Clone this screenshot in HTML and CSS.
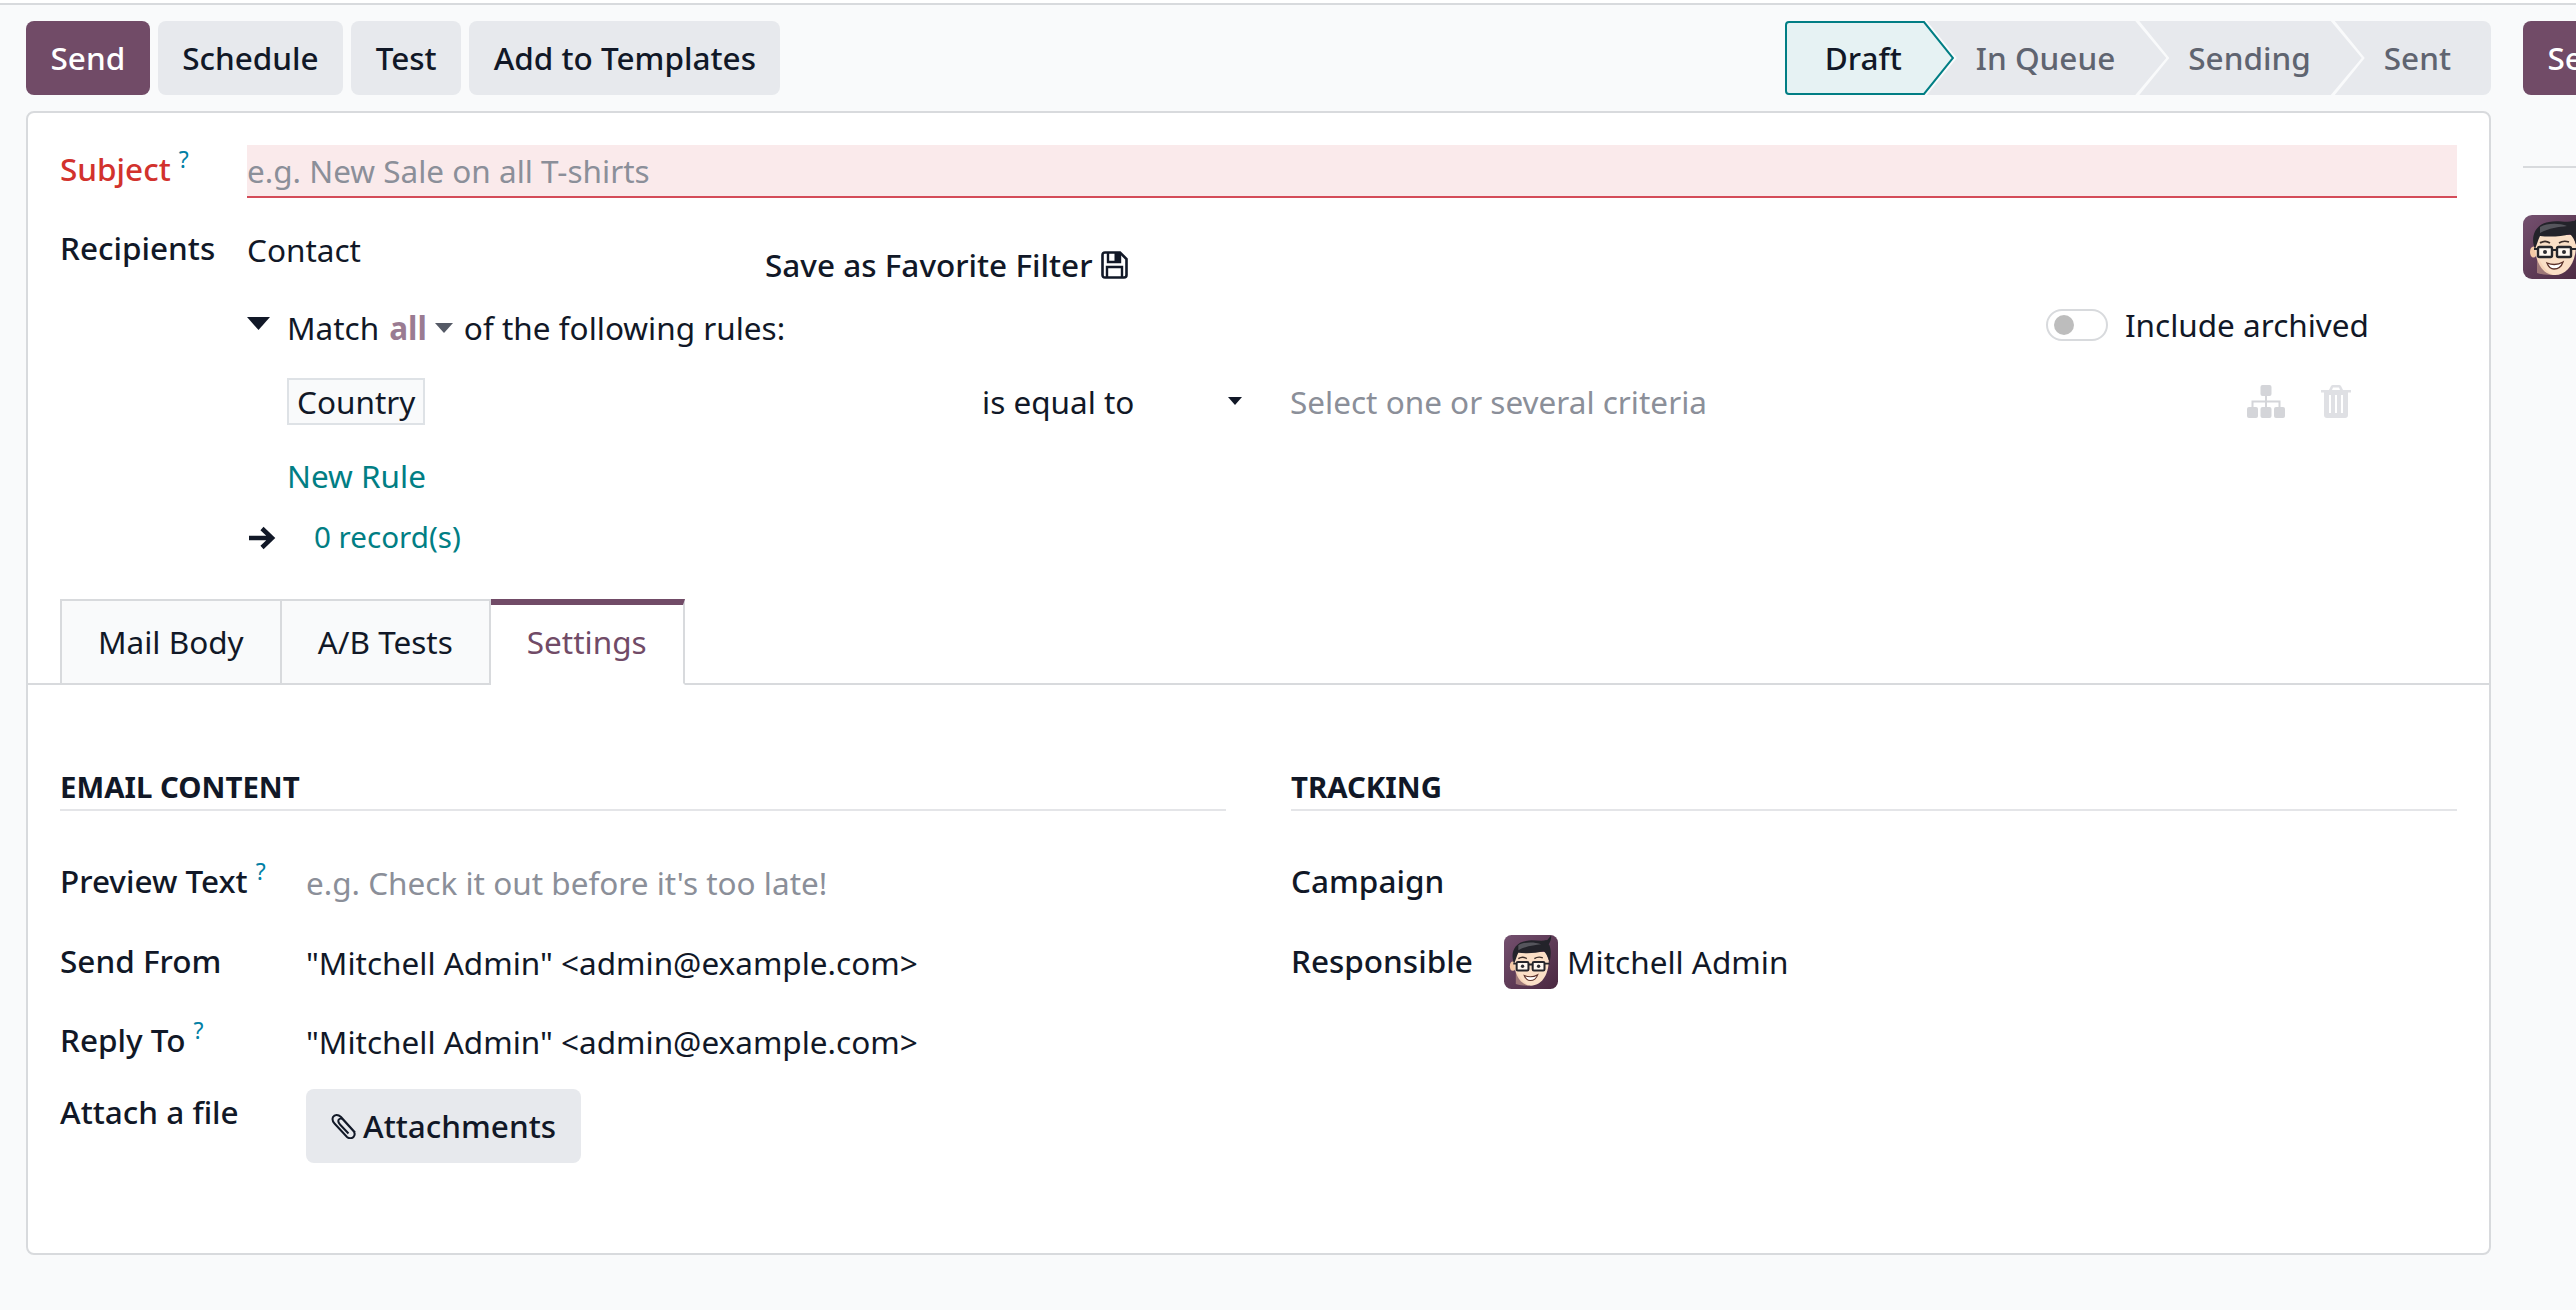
FILE: index.html
```html
<!DOCTYPE html>
<html lang="en">
<head>
<meta charset="utf-8">
<title>Mailing</title>
<link rel="stylesheet" href="styles.css">
</head>
<body>
<svg class="defs" width="0" height="0" aria-hidden="true">
  <defs>
    <linearGradient id="avbg" x1="0" y1="0" x2="1" y2="1">
      <stop offset="0" stop-color="#74506f"/>
      <stop offset="1" stop-color="#4a2840"/>
    </linearGradient>
    <symbol id="avatar" viewBox="0 0 64 64">
      <rect width="64" height="64" rx="9" fill="url(#avbg)"/>
      <ellipse cx="10.500" cy="37" rx="3.500" ry="5.500" fill="#f3c9a6"/>
      <path d="M12 30C12 48 20 60 32 60S53 48 53 30L50 20H16Z" fill="#fadfc6"/>
      <path d="M14 58C20 60 26 60 30 60C22 56 17 48 14 38Z" fill="#f0c6a6" opacity=".45"/>
      <path d="M12 34C7 22 12 9 26 7C34 5 44 8 50 6C52 7 53 3 56 1C56 5 55 8 53 11C56 15 56 24 54 32C52 26 50 22 47 19C38 22 25 22 17 21C15 25 14 29 12 34Z" fill="#23232a"/>
      <path d="M17 12C24 8 36 8 44 11C36 12 26 13 17 18Z" fill="#55555c"/>
      <rect x="15" y="32" width="14" height="10" rx="1.500" fill="#fff8f0" stroke="#26262b" stroke-width="2.400"/>
      <rect x="34" y="32" width="14" height="10" rx="1.500" fill="#fff8f0" stroke="#26262b" stroke-width="2.400"/>
      <path d="M29 35H34M48 34L54 34M15 34L11 34" stroke="#26262b" stroke-width="2.200" fill="none"/>
      <circle cx="22" cy="37" r="2" fill="#2c2c30"/>
      <circle cx="41" cy="37" r="2" fill="#2c2c30"/>
      <path d="M17 28C20 26 24 26 27 28M36 28C39 26 43 26 46 27" stroke="#3a2c28" stroke-width="1.600" fill="none"/>
      <path d="M24 48C29 50 35 50 40 47C38 53 35 54 31 54C28 54 25.500 52 24 48Z" fill="#fff" stroke="#5b3028" stroke-width="1.300"/>
    </symbol>
  </defs>
</svg>

<div class="app">
  <div class="topline"></div>
  <div class="columns">
    <main class="main">
      <header class="panel">
        <div class="actions">
          <button class="btn btn-primary">Send</button>
          <button class="btn">Schedule</button>
          <button class="btn">Test</button>
          <button class="btn">Add to Templates</button>
        </div>
        <div class="statusbar">
          <div class="stage stage-current">
            <svg class="draft-shape" viewBox="0 0 169 74" aria-hidden="true"><path d="M1 4Q1 1 4 1H139L168 37L139 73H4Q1 73 1 70Z" fill="#e6f2f3" stroke="#017e84" stroke-width="2"/></svg>
            <span class="stage-label">Draft</span>
          </div>
          <div class="stage">In Queue</div>
          <div class="stage">Sending</div>
          <div class="stage stage-last">Sent</div>
        </div>
      </header>

      <section class="sheet">
        <div class="top-row subject-row">
          <label class="label label-required">Subject<sup class="help">?</sup></label>
          <div class="subject-field"><span class="placeholder">e.g. New Sale on all T-shirts</span></div>
        </div>

        <div class="top-row recipients-row">
          <label class="label">Recipients</label>
          <div class="domain">
            <div class="model-line">
              <span class="value">Contact</span>
              <span class="favorite">Save as Favorite Filter
                <svg class="icon-floppy" viewBox="0 0 27 28" aria-hidden="true"><path d="M1.500 4Q1.500 1.500 4 1.500H19L25.500 8V24Q25.500 26.500 23 26.500H4Q1.500 26.500 1.500 24Z" fill="none" stroke="#111827" stroke-width="2.600"/><path d="M7 2V11H19V2M6 26V16H21V26" fill="none" stroke="#111827" stroke-width="2.400"/><rect x="13.500" y="2" width="5" height="8" fill="#111827"/></svg>
              </span>
            </div>
            <div class="match-line">
              <svg class="tri" viewBox="0 0 23 13" aria-hidden="true"><path d="M0 0H23L11.500 13Z" fill="#111827"/></svg>
              <span class="match-text">Match</span>
              <span class="match-all">all</span>
              <svg class="tri-small" viewBox="0 0 18 10" aria-hidden="true"><path d="M0 0H18L9 10Z" fill="#555a66"/></svg>
              <span>of the following rules:</span>
              <div class="archived">
                <span class="toggle"><span class="knob"></span></span>
                <span>Include archived</span>
              </div>
            </div>
            <div class="rule-line">
              <div class="rule-field"><span class="chip">Country</span></div>
              <div class="rule-op"><span>is equal to</span><svg class="tri-op" viewBox="0 0 14 8" aria-hidden="true"><path d="M0 0H14L7 8Z" fill="#111827"/></svg></div>
              <span class="placeholder">Select one or several criteria</span>
              <div class="rule-icons">
                <svg class="icon-sitemap" viewBox="0 0 38 33" aria-hidden="true"><g fill="#d4d5d9"><rect x="13.500" y="0" width="11" height="11" rx="2"/><rect x="0" y="22" width="11" height="11" rx="2"/><rect x="13.500" y="22" width="11" height="11" rx="2"/><rect x="27" y="22" width="11" height="11" rx="2"/></g><path d="M19 10V22M5.500 22V16.500H32.500V22" fill="none" stroke="#d4d5d9" stroke-width="2"/></svg>
                <svg class="icon-trash" viewBox="0 0 30 33" aria-hidden="true"><path fill="#dfe0e4" fill-rule="evenodd" d="M0 5H8L10 1Q10.500 0 12 0H18Q19.500 0 20 1L22 5H30V7.500H27V30Q27 33 24 33H6Q3 33 3 30V7.500H0ZM11 5H19L18 2.500H12ZM8 10V28H10V10ZM14 10V28H16V10ZM20 10V28H22V10Z"/></svg>
              </div>
            </div>
            <div class="new-rule">New Rule</div>
            <div class="records-line">
              <svg class="icon-arrow" viewBox="0 0 28 24" aria-hidden="true"><path d="M1 12H24M14 2.500L24 12L14 21.500" fill="none" stroke="#111827" stroke-width="4.500"/></svg>
              <span class="records">0 record(s)</span>
            </div>
          </div>
        </div>

        <nav class="tabs">
          <div class="tab">Mail Body</div>
          <div class="tab">A/B Tests</div>
          <div class="tab tab-active">Settings</div>
        </nav>

        <div class="settings">
          <div class="group">
            <h3 class="group-title">EMAIL CONTENT</h3>
            <div class="fields fields-left">
              <label class="label f-label">Preview Text<sup class="help">?</sup></label>
              <span class="placeholder f-value">e.g. Check it out before it's too late!</span>
              <label class="label f-label">Send From</label>
              <span class="value f-value">"Mitchell Admin" &lt;admin@example.com&gt;</span>
              <label class="label f-label">Reply To<sup class="help">?</sup></label>
              <span class="value f-value">"Mitchell Admin" &lt;admin@example.com&gt;</span>
              <label class="label f-label attach-label">Attach a file</label>
              <div class="attach-cell">
                <button class="btn btn-attach">
                  <svg class="icon-clip" viewBox="0 0 26 26" aria-hidden="true"><path d="M24 19.500L10 4C7 1 3.500 1.500 2 4C1 6.500 1.500 8.500 3.500 10.500L16 24C18 25.800 21 25.500 22.500 24C24 22 24 19.500 22 17.500L12 6.500C10.500 5 8.500 5.500 7.500 7C7 8.500 7.500 10 9 11.500L17.500 20.500" fill="none" stroke="#111827" stroke-width="2"/></svg>
                  Attachments
                </button>
              </div>
            </div>
          </div>
          <div class="group">
            <h3 class="group-title">TRACKING</h3>
            <div class="fields fields-right">
              <label class="label f-label">Campaign</label>
              <span class="f-value"></span>
              <label class="label f-label">Responsible</label>
              <div class="f-value user">
                <svg class="avatar-small" aria-hidden="true"><use href="#avatar"/></svg>
                <span>Mitchell Admin</span>
              </div>
            </div>
          </div>
        </div>
      </section>
    </main>

    <aside class="chatter">
      <button class="btn btn-primary btn-chatter">Send message</button>
      <div class="chatter-rule"></div>
      <svg class="avatar-large" aria-hidden="true"><use href="#avatar"/></svg>
    </aside>
  </div>
</div>
</body>
</html>
```
FILE: styles.css
```css
* { box-sizing: border-box; }
html, body { margin: 0; padding: 0; height: 100%; }
body {
  background: #f9fafb;
  color: #111827;
  font-family: "Noto Sans", "Open Sans", sans-serif;
  font-size: 31.5px;
  line-height: 44px;
  overflow: hidden;
}
.defs { position: absolute; }
.app { width: 2576px; height: 1310px; overflow: hidden; }
.topline { height: 5px; background: #fff; border-bottom: 2px solid #d8dadd; }
.columns { display: flex; padding-left: 26px; gap: 32px; width: 2576px; }
.main { flex: 0 0 2465px; }
.panel { display: flex; justify-content: space-between; padding-top: 16px; height: 90px; }
.actions { display: flex; gap: 8px; }
.btn {
  height: 74px;
  padding: 0 24.5px;
  border: 0;
  border-radius: 8px;
  background: #e7e9ed;
  color: #111827;
  font: 500 31.5px/44px "Noto Sans", "Open Sans", sans-serif;
  white-space: nowrap;
}
.btn-primary { background: #714b67; color: #fff; }

.statusbar { display: flex; height: 74px; }
.stage {
  position: relative;
  height: 74px;
  line-height: 74px;
  padding: 0 51px 0 49px;
  margin-left: -27px;
  background: #e7e9ed;
  color: #5f6470;
  font-weight: 500;
  clip-path: polygon(0 0, calc(100% - 31px) 0, 100% 50%, calc(100% - 31px) 100%, 0 100%, 30px 50%);
}
.stage-current {
  width: 169px;
  margin-left: 0;
  padding: 0 0 0 40px;
  background: none;
  color: #111827;
  clip-path: none;
  z-index: 1;
}
.draft-shape { position: absolute; left: 0; top: 0; width: 169px; height: 74px; }
.stage-label { position: relative; }
.stage-last {
  padding-right: 40px;
  border-radius: 0 8px 8px 0;
  clip-path: polygon(0 0, 100% 0, 100% 100%, 0 100%, 30px 50%);
}

.sheet {
  margin-top: 16px;
  padding: 32px 32px 90px;
  background: #fff;
  border: 2px solid #d8dadd;
  border-radius: 8px;
}
.top-row { display: grid; grid-template-columns: 187px 1fr; }
.label { font-weight: 500; }
.label-required { color: #d2322d; }
.help {
  margin-left: 8px;
  color: #0180a5;
  font-size: 23px;
  font-weight: 400;
  line-height: 0;
  vertical-align: 13px;
}
.placeholder { color: #8b8f99; }
.subject-row .label { line-height: 47px; }
.subject-field {
  height: 53px;
  line-height: 50px;
  padding-top: 1px;
  background: #faeaeb;
  border-bottom: 2px solid #d44c59;
}
.recipients-row { margin-top: 30px; }
.recipients-row > .label { line-height: 40px; }
.model-line { display: grid; grid-template-columns: 518px auto; }
.favorite { margin-top: 15px; display: flex; align-items: center; gap: 8px; width: max-content; font-weight: 500; }
.icon-floppy { width: 27px; height: 28px; }
.match-line { display: flex; align-items: center; margin-top: 19px; padding-right: 88px; }
.tri { width: 23px; height: 13px; margin: -10px 17px 0 0; }
.match-all { margin-left: 10px; color: #9a7b92; font-weight: 700; }
.tri-small { width: 18px; height: 10px; margin: 0 11px 0 8px; }
.archived { margin-left: auto; display: flex; align-items: center; gap: 17px; margin-top: -7px; }
.toggle {
  display: flex;
  align-items: center;
  width: 62px;
  height: 32px;
  padding-left: 6px;
  background: #fff;
  border: 2px solid #d8dadd;
  border-radius: 16px;
}
.knob { width: 20px; height: 20px; border-radius: 50%; background: #bdbdbd; }
.rule-line { display: flex; align-items: center; margin: 28px 0 0 40px; height: 47px; padding-right: 106px; }
.rule-field { flex: 0 0 695px; }
.chip {
  display: inline-block;
  height: 47px;
  line-height: 43px;
  padding: 0 8px;
  background: #f9fafb;
  border: 2px solid #dee2e6;
}
.rule-op { flex: 0 0 308px; display: flex; align-items: center; justify-content: space-between; padding-right: 48px; }
.tri-op { width: 14px; height: 8px; margin-top: -2px; }
.rule-icons { margin-left: auto; display: flex; align-items: center; gap: 36px; }
.icon-sitemap { width: 38px; height: 33px; }
.icon-trash { width: 30px; height: 33px; }
.new-rule { height: 44px; margin: 30px 0 0 40px; color: #017e84; line-height: 41px; }
.records-line { display: flex; align-items: center; height: 44px; margin-top: 17px; }
.icon-arrow { width: 28px; height: 24px; margin: 0 38px 0 1px; }
.records { padding-bottom: 3px; color: #017e84; font-size: 29.6px; }

.tabs {
  display: flex;
  height: 86px;
  margin: 39px -32px 0;
  padding-left: 32px;
  border-bottom: 2px solid #d8dadd;
}
.tab {
  height: 86px;
  line-height: 81px;
  padding: 0 36px;
  background: #f9fafb;
  border: 2px solid #d8dadd;
  border-left-width: 0;
}
.tab:first-child { border-left-width: 2px; }
.tab-active {
  padding: 0 36px;
  background: #fff;
  color: #714b67;
  border-top: 6px solid #714b67;
  border-bottom-color: #fff;
  line-height: 73px;
}

.settings { display: grid; grid-template-columns: 1166px 1166px; gap: 65px; padding-top: 80px; }
.group-title {
  margin: 0;
  height: 46px;
  font-size: 29.4px;
  line-height: 44px;
  font-weight: 700;
  border-bottom: 2px solid #e4e5e8;
}
.fields { display: grid; align-items: start; margin-top: 50px; }
.fields-left { grid-template-columns: 246px 1fr; grid-template-rows: 80px 79px 69px 74px; }
.fields-right { grid-template-columns: 213px 1fr; grid-template-rows: 80px 79px; }
.f-label { margin-top: -2px; }
.attach-label { margin-top: 1px; }
.f-value { display: block; }
.btn-attach { display: flex; align-items: center; gap: 6px; padding: 0 25px; }
.icon-clip { width: 26px; height: 26px; }
.user { display: flex; align-items: center; gap: 9px; margin-top: -6px; }
.avatar-small { width: 54px; height: 54px; }

.chatter { flex: 0 0 400px; padding-top: 16px; }
.btn-chatter { display: block; }
.chatter-rule { height: 2px; margin-top: 71px; background: #d8dadd; }
.avatar-large { display: block; width: 64px; height: 64px; margin-top: 47px; }
```
